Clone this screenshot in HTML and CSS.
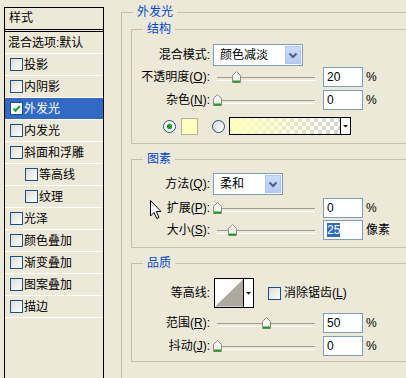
FILE: index.html
```html
<!DOCTYPE html>
<html lang="zh-CN">
  <head>
    <meta charset="UTF-8" />
    <title>图层样式 - 外发光</title>
    <link rel="stylesheet" href="styles.css">
  </head>
  <body>
    <div class="dialog">
      <div class="style-panel">
        <div class="panel-head">样式</div>
        <ul class="style-list">
          <li class="blend">混合选项:默认</li>
          <li><span class="check"></span>投影</li>
          <li><span class="check"></span>内阴影</li>
          <li class="selected">
            <span class="check on">
              <svg width="11" height="11" viewBox="0 0 11 11"><path d="M2.5 5.5 L4.5 7.8 L8.8 3" fill="none" stroke="#21a121" stroke-width="2"/></svg>
            </span>外发光
          </li>
          <li><span class="check"></span>内发光</li>
          <li><span class="check"></span>斜面和浮雕</li>
          <li class="sub"><span class="check"></span>等高线</li>
          <li class="sub"><span class="check"></span>纹理</li>
          <li><span class="check"></span>光泽</li>
          <li><span class="check"></span>颜色叠加</li>
          <li><span class="check"></span>渐变叠加</li>
          <li><span class="check"></span>图案叠加</li>
          <li><span class="check"></span>描边</li>
        </ul>
      </div>

      <fieldset class="group outer">
        <legend>外发光</legend>

        <fieldset class="group structure">
          <legend>结构</legend>
          <div class="row">
            <span class="label">混合模式:</span>
            <div class="select wide"><span>颜色减淡</span><span class="drop"><svg width="16" height="18" viewBox="0 0 16 18"><path d="M4.5 7.5 L8 11 L11.5 7.5" fill="none" stroke="#4d6185" stroke-width="2"/></svg></span></div>
          </div>
          <div class="row">
            <span class="label">不透明度(<u>O</u>):</span>
            <div class="slider"><span class="thumb" style="left: 19px"><svg width="9" height="12" viewBox="0 0 9 12"><path d="M0.5 4.5 L4.5 0.5 L8.5 4.5 V11.5 H0.5Z" fill="#f6f6f2" stroke="#8d8c80"/><path d="M1 10.5 H8" stroke="#21a121" stroke-width="2"/></svg></span></div>
            <span class="field">20</span><span class="unit">%</span>
          </div>
          <div class="row gap1">
            <span class="label">杂色(<u>N</u>):</span>
            <div class="slider"><span class="thumb" style="left: 0px"><svg width="9" height="12" viewBox="0 0 9 12"><path d="M0.5 4.5 L4.5 0.5 L8.5 4.5 V11.5 H0.5Z" fill="#f6f6f2" stroke="#8d8c80"/><path d="M1 10.5 H8" stroke="#21a121" stroke-width="2"/></svg></span></div>
            <span class="field">0</span><span class="unit">%</span>
          </div>
          <div class="color-row">
            <span class="radio on"></span>
            <span class="swatch"></span>
            <span class="radio second"></span>
            <div class="gradient">
              <span class="grad-fill"></span>
              <span class="grad-drop"><svg width="9" height="16" viewBox="0 0 9 16"><path d="M2 7 H7 L4.5 9.5Z" fill="#000"/></svg></span>
            </div>
          </div>
        </fieldset>

        <fieldset class="group elements">
          <legend>图素</legend>
          <div class="row">
            <span class="label">方法(<u>Q</u>):</span>
            <div class="select narrow"><span>柔和</span><span class="drop"><svg width="16" height="18" viewBox="0 0 16 18"><path d="M4.5 7.5 L8 11 L11.5 7.5" fill="none" stroke="#4d6185" stroke-width="2"/></svg></span></div>
          </div>
          <div class="row gap2">
            <span class="label">扩展(<u>P</u>):</span>
            <div class="slider"><span class="thumb" style="left: 0px"><svg width="9" height="12" viewBox="0 0 9 12"><path d="M0.5 4.5 L4.5 0.5 L8.5 4.5 V11.5 H0.5Z" fill="#f6f6f2" stroke="#8d8c80"/><path d="M1 10.5 H8" stroke="#21a121" stroke-width="2"/></svg></span></div>
            <span class="field">0</span><span class="unit">%</span>
          </div>
          <div class="row">
            <span class="label">大小(<u>S</u>):</span>
            <div class="slider"><span class="thumb" style="left: 15px"><svg width="9" height="12" viewBox="0 0 9 12"><path d="M0.5 4.5 L4.5 0.5 L8.5 4.5 V11.5 H0.5Z" fill="#f6f6f2" stroke="#8d8c80"/><path d="M1 10.5 H8" stroke="#21a121" stroke-width="2"/></svg></span></div>
            <span class="field"><span class="picked">25</span></span><span class="unit">像素</span>
          </div>
        </fieldset>

        <fieldset class="group quality">
          <legend>品质</legend>
          <div class="row contour-row">
            <span class="label">等高线:</span>
            <div class="contour">
              <svg class="contour-preview" width="29" height="28" viewBox="0 0 29 28"><rect width="29" height="28" fill="#fff"/><polygon points="0,28 29,0 29,28" fill="#aea99d"/></svg>
              <span class="contour-drop"><svg width="9" height="28" viewBox="0 0 9 28"><path d="M2 13 H7 L4.5 15.5Z" fill="#000"/></svg></span>
            </div>
            <span class="check plain"></span><span class="check-text">消除锯齿(<u>L</u>)</span>
          </div>
          <div class="row gap4">
            <span class="label">范围(<u>R</u>):</span>
            <div class="slider"><span class="thumb" style="left: 49px"><svg width="9" height="12" viewBox="0 0 9 12"><path d="M0.5 4.5 L4.5 0.5 L8.5 4.5 V11.5 H0.5Z" fill="#f6f6f2" stroke="#8d8c80"/><path d="M1 10.5 H8" stroke="#21a121" stroke-width="2"/></svg></span></div>
            <span class="field">50</span><span class="unit">%</span>
          </div>
          <div class="row gap1">
            <span class="label">抖动(<u>J</u>):</span>
            <div class="slider"><span class="thumb" style="left: 0px"><svg width="9" height="12" viewBox="0 0 9 12"><path d="M0.5 4.5 L4.5 0.5 L8.5 4.5 V11.5 H0.5Z" fill="#f6f6f2" stroke="#8d8c80"/><path d="M1 10.5 H8" stroke="#21a121" stroke-width="2"/></svg></span></div>
            <span class="field">0</span><span class="unit">%</span>
          </div>
        </fieldset>
      </fieldset>
    </div>

    <!-- mouse pointer -->
    <svg class="cursor" width="12" height="19" viewBox="0 0 12 19"><path d="M0.5 0.5 V16 L4 12.5 L6.8 18.5 L9 17.5 L6.3 11.5 H11 Z" fill="#fff" stroke="#000"/></svg>
  </body>
</html>
```

FILE: styles.css
```css
* {
  box-sizing: border-box;
}

body {
  margin: 0;
  width: 406px;
  height: 378px;
  overflow: hidden;
  position: relative;
  background: #ece9d8;
  color: #000;
  font: 12px/14px "Liberation Sans", "Noto Sans CJK SC", sans-serif;
}

.dialog {
  display: flex;
  align-items: flex-start;
}

/* left list of styles, cut by the bottom of the window */
.style-panel {
  flex-shrink: 0;
  width: 100px;
  height: 371px;
  margin: 7px 0 0 4px;
  border: 1px solid #000;
  border-bottom: none;
}

.panel-head {
  height: 24px;
  padding-left: 4px;
  line-height: 21px;
  border-bottom: 3px double #000;
}

.style-list {
  list-style: none;
  margin: 0;
  padding: 0;
}

.style-list li {
  display: flex;
  align-items: center;
  height: 22px;
  padding-left: 5px;
  border-bottom: 1px solid #fff;
}

.style-list li.blend {
  padding-left: 3px;
}

.style-list li.sub {
  padding-left: 20px;
}

.style-list li.selected {
  background: #316ac5;
  color: #fff;
}

.check {
  flex-shrink: 0;
  width: 13px;
  height: 13px;
  margin-right: 1px;
  border: 1px solid #1c5180;
  background: linear-gradient(135deg, #dcdcd5, #fff);
}

.check.on {
  background: #fff;
}

.check svg {
  display: block;
}

/* group boxes, open on the right where the window cuts them */
.group {
  margin: 0;
  padding: 0;
  min-width: 0;
  border: 1px solid #c3bfae;
  border-right: none;
}

.group legend {
  margin-left: 11px;
  padding: 0 4px;
  color: #0046d5;
  line-height: 14px;
}

.outer {
  flex-shrink: 0;
  width: 285px;
  height: 373px;
  margin: 5px 0 0 17px;
  border-bottom: none;
}

.outer .group {
  width: 275px;
  margin: 0 0 8px 9px;
}

.structure {
  margin-top: 3px !important;
  padding: 8px 0 8px 0;
}

.elements {
  padding: 7px 0 6px 0;
}

.quality {
  padding: 8px 0 4px 0;
}

.row {
  display: flex;
  align-items: center;
  height: 22px;
}

.row.gap1 {
  margin-top: 1px;
}

.row.gap2 {
  margin-top: 2px;
}

.row.gap4 {
  margin-top: 4px;
}

.label {
  width: 78px;
  margin-right: 3px;
  text-align: right;
  white-space: nowrap;
}

.select {
  display: flex;
  align-items: center;
  justify-content: space-between;
  height: 22px;
  padding-left: 6px;
  background: #fff;
  border: 1px solid #7f9db9;
}

.select.wide {
  width: 90px;
}

.select.narrow {
  width: 70px;
}

.drop {
  width: 16px;
  height: 18px;
  margin-right: 1px;
  background: linear-gradient(#cddcfc, #b7caf5);
  border: 1px solid #b2c4ed;
}

.drop svg {
  display: block;
  margin: -1px 0 0 -1px;
}

.slider {
  position: relative;
  width: 105px;
  height: 22px;
  margin-right: 5px;
}

.slider::before {
  content: "";
  position: absolute;
  left: 4px;
  right: 3px;
  top: 11px;
  height: 2px;
  border-top: 1px solid #a09d90;
  border-bottom: 1px solid #fff;
}

.thumb {
  position: absolute;
  top: 5px;
}

.thumb svg {
  display: block;
}

.field {
  width: 40px;
  height: 20px;
  padding-left: 3px;
  line-height: 18px;
  background: #fff;
  border: 1px solid #7f9db9;
}

.picked {
  background: #316ac5;
  color: #fff;
}

.unit {
  margin-left: 3px;
}

/* colour choice */
.color-row {
  display: flex;
  align-items: center;
  height: 18px;
  margin-top: 6px;
}

.radio {
  width: 13px;
  height: 13px;
  margin-left: 31px;
  border: 1px solid #1c5180;
  border-radius: 50%;
  background: linear-gradient(135deg, #dcdcd5, #fff);
}

.radio.on {
  background: radial-gradient(circle, #21a121 0 2.5px, #fff 3px);
}

.radio.second {
  margin-left: 14px;
}

.swatch {
  width: 17px;
  height: 17px;
  margin-left: 5px;
  background: #ffffbe;
  border: 1px solid #b5b29f;
}

.gradient {
  display: flex;
  width: 122px;
  height: 18px;
  margin-left: 4px;
  border: 1px solid #000;
  background-color: #fff;
  background-image:
    linear-gradient(45deg, #d4d4d4 25%, transparent 25%, transparent 75%, #d4d4d4 75%),
    linear-gradient(45deg, #d4d4d4 25%, transparent 25%, transparent 75%, #d4d4d4 75%);
  background-size: 8px 8px;
  background-position: 0 0, 4px 4px;
}

.grad-fill {
  flex: 1;
  background: linear-gradient(to right, #ffffbe, rgba(255, 255, 190, 0));
}

.grad-drop {
  width: 10px;
  background: #fff;
  border-left: 1px solid #000;
}

.grad-drop svg {
  display: block;
}

/* contour picker */
.contour-row {
  height: 30px;
}

.contour {
  display: flex;
  width: 40px;
  height: 30px;
  margin-left: 1px;
  border: 1px solid #000;
}

.contour-preview {
  display: block;
  border-right: 1px solid #000;
}

.contour-drop {
  flex: 1;
  background: #fff;
}

.contour-drop svg {
  display: block;
}

.check.plain {
  margin-left: 14px;
}

.check-text {
  margin-left: 2px;
}

.cursor {
  position: absolute;
  left: 150px;
  top: 200px;
}
```
